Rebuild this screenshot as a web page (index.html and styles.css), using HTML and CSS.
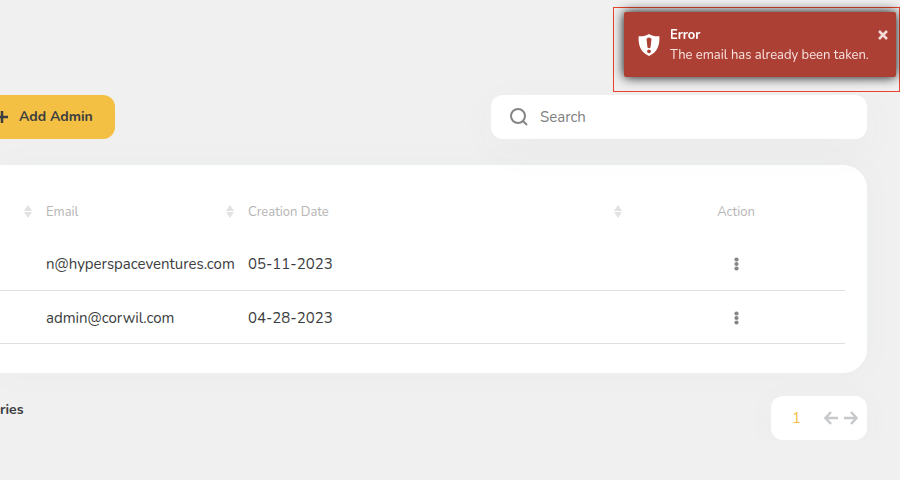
FILE: index.html
```
<!DOCTYPE html>
<html lang="en">

<head>
  <meta charset="UTF-8" />
  <meta name="viewport" content="width=device-width, initial-scale=1.0" />
  <title>Admins</title>
  <link rel="stylesheet" href="styles.css">
</head>

<body>
  <div class="toast-container">
    <div class="toast" role="alert">
      <svg class="toast-icon" viewBox="0 0 22 22" aria-hidden="true">
        <path fill="#fff" d="M11 0C8 2 4.500 2.600 0.600 2.300C0.300 11 2 18 11 22C20 18 21.700 11 21.400 2.300C17.500 2.600 14 2 11 0Z" />
        <path fill="#ad4035" d="M8.600 5.500C8.600 2.800 13.400 2.800 13.400 5.500L12.600 13C12.400 14.600 9.600 14.600 9.400 13Z" />
        <circle fill="#ad4035" cx="11" cy="17.300" r="1.900" />
      </svg>
      <div class="toast-text">
        <strong class="toast-title">Error</strong>
        <p class="toast-message">The email has already been taken.</p>
      </div>
      <button class="toast-close" type="button" aria-label="Close">
        <svg viewBox="0 0 10 10" width="10" height="10"><path d="M1 1L9 9M9 1L1 9" /></svg>
      </button>
    </div>
  </div>

  <main class="page">
    <div class="toolbar">
      <button class="add-button" type="button">
        <svg viewBox="0 0 12 12" width="12" height="12" aria-hidden="true"><path d="M6 0V12M0 6H12" /></svg>
        Add Admin
      </button>
      <label class="search">
        <svg viewBox="0 0 18 18" width="18" height="18" aria-hidden="true">
          <circle cx="8" cy="8" r="7" />
          <path d="M13 13L17 17" />
        </svg>
        <input type="search" placeholder="Search" aria-label="Search">
      </label>
    </div>

    <section class="card">
      <table class="admins">
        <thead>
          <tr>
            <th class="col-name"><span class="sort"></span></th>
            <th class="col-email">Email<span class="sort"></span></th>
            <th>Creation Date<span class="sort"></span></th>
            <th class="col-action">Action</th>
          </tr>
        </thead>
        <tbody>
          <tr>
            <td></td>
            <td>n@hyperspaceventures.com</td>
            <td>05-11-2023</td>
            <td class="col-action">
              <button class="menu-button" type="button" aria-label="Actions">
                <svg viewBox="0 0 5 14" width="5" height="14"><circle cx="2.500" cy="2.500" r="2.100" /><circle cx="2.500" cy="7" r="2.100" /><circle cx="2.500" cy="11.500" r="2.100" /></svg>
              </button>
            </td>
          </tr>
          <tr>
            <td></td>
            <td>admin@corwil.com</td>
            <td>04-28-2023</td>
            <td class="col-action">
              <button class="menu-button" type="button" aria-label="Actions">
                <svg viewBox="0 0 5 14" width="5" height="14"><circle cx="2.500" cy="2.500" r="2.100" /><circle cx="2.500" cy="7" r="2.100" /><circle cx="2.500" cy="11.500" r="2.100" /></svg>
              </button>
            </td>
          </tr>
        </tbody>
      </table>
    </section>

    <footer class="table-footer">
      <p class="entries">ries</p>
      <nav class="pagination" aria-label="Pagination">
        <a class="page-number" href="#">1</a>
        <button type="button" aria-label="Previous">
          <svg viewBox="0 0 14 14" width="14" height="14"><path d="M14 7H2M7 1L1.500 7L7 13" /></svg>
        </button>
        <button type="button" aria-label="Next">
          <svg viewBox="0 0 14 14" width="14" height="14"><path d="M0 7H12M7 1L12.500 7L7 13" /></svg>
        </button>
      </nav>
    </footer>
  </main>
</body>

</html>
```
FILE: styles.css
```
* {
  margin: 0;
  padding: 0;
  box-sizing: border-box;
}

body {
  font-family: Nunito, Lato, sans-serif;
  font-size: 15px;
  line-height: 20px;
  background-color: #f0f0f0;
  color: #3b3d40;
  overflow-x: hidden;
}

button,
input {
  font: inherit;
  color: inherit;
  border: none;
  background: none;
}

button {
  cursor: pointer;
}

svg {
  display: block;
  flex: none;
}

/* Toast */
.toast-container {
  position: fixed;
  top: 7px;
  right: 0;
  width: 287px;
  padding: 4px 3px 14px 10px;
  border: 1px solid #e8432d;
  z-index: 10;
}

.toast {
  display: flex;
  align-items: center;
  height: 65px;
  padding: 0 8px 0 14px;
  border-radius: 2px;
  background-color: #ad4035;
  color: #fff;
  font-size: 13px;
  box-shadow: 0 0 12px #000;
}

.toast-icon {
  width: 22px;
  height: 22px;
  margin-right: 10px;
}

.toast-text {
  flex: 1;
  white-space: nowrap;
}

.toast-title,
.toast-message {
  display: block;
}

.toast-message {
  color: #f8e3e1;
}

.toast-close {
  align-self: flex-start;
  margin-top: 18px;
}

.toast-close path {
  stroke: #f3dad7;
  stroke-width: 2.500;
}

/* Toolbar */
.page {
  padding: 95px 33px 0 0;
}

.toolbar {
  display: flex;
  justify-content: space-between;
  margin-bottom: 26px;
}

.add-button {
  display: flex;
  align-items: center;
  gap: 11px;
  height: 44px;
  margin-left: -24px;
  padding: 0 22px 0 20px;
  border-radius: 12px;
  background-color: #f3c044;
  font-size: 14px;
  font-weight: bold;
}

.add-button path {
  stroke: #3b3d40;
  stroke-width: 2.500;
}

.search {
  display: flex;
  align-items: center;
  gap: 12px;
  width: 376px;
  height: 44px;
  padding: 0 19px;
  border-radius: 12px;
  background-color: #fff;
  box-shadow: 0 10px 40px rgba(100, 110, 130, 0.04);
}

.search svg {
  fill: none;
  stroke: #858585;
  stroke-width: 2;
}

.search input {
  flex: 1;
  min-width: 0;
  outline: none;
}

.search input::placeholder {
  color: #808080;
  opacity: 1;
}

/* Table */
.card {
  padding: 20px 22px 29px 0;
  border-radius: 0 24px 24px 0;
  background-color: #fff;
  box-shadow: 0 0 30px rgba(100, 120, 120, 0.04);
}

.admins {
  width: 100%;
  table-layout: fixed;
  border-collapse: collapse;
}

.admins th,
.admins td {
  height: 53px;
  padding: 2px 9px 0;
  text-align: left;
  white-space: nowrap;
}

.admins th {
  position: relative;
  height: 52px;
  color: #b5b5b5;
  font-size: 13px;
  font-weight: normal;
}

.admins td {
  border-bottom: 1px solid #dfdfdf;
}

.admins .col-name {
  width: 37px;
}

.admins .col-email {
  width: 202px;
}

.admins .col-action {
  width: 218px;
  text-align: center;
}

.sort {
  position: absolute;
  top: 50%;
  right: 5px;
  margin-top: -6px;
}

.sort::before,
.sort::after {
  content: "";
  display: block;
  border: 4px solid transparent;
}

.sort::before {
  border-top: none;
  border-bottom: 6px solid #e2e2e2;
  margin-bottom: 1px;
}

.sort::after {
  border-bottom: none;
  border-top: 6px solid #e2e2e2;
}

.menu-button {
  padding: 4px;
  vertical-align: middle;
}

.menu-button circle {
  fill: #858585;
}

/* Footer */
.table-footer {
  display: flex;
  justify-content: space-between;
  align-items: flex-start;
  margin-top: 23px;
}

.entries {
  padding-top: 4px;
  font-size: 14px;
  font-weight: bold;
}

.pagination {
  display: flex;
  align-items: center;
  gap: 6px;
  height: 44px;
  padding: 0 9px 0 21px;
  border-radius: 12px;
  background-color: #fff;
  box-shadow: 0 4px 30px rgba(100, 110, 110, 0.04);
}

.page-number {
  margin-right: 17px;
  color: #f3c044;
  text-decoration: none;
}

.pagination path {
  fill: none;
  stroke: #c6c8ca;
  stroke-width: 2.500;
}
```
